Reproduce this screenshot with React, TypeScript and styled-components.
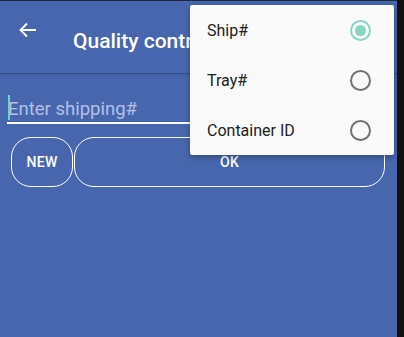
import React, { useState } from 'react';
import styled, { createGlobalStyle } from 'styled-components';

const GlobalStyle = createGlobalStyle`
  html, body {
    margin: 0;
    padding: 0;
    background: #111;
    font-family: Roboto, "Noto Sans", sans-serif;
  }
`;

const Frame = styled.div`
  width: 397px;
  height: 337px;
  padding-top: 1px;
  box-sizing: border-box;
  background: #1c2440;
  position: relative;
  overflow: hidden;
`;

const Screen = styled.div`
  height: 100%;
  background: #4766ad;
  display: flex;
  flex-direction: column;
`;

const Header = styled.div`
  height: 72px;
  display: flex;
  align-items: center;
  padding: 0 0 0 18px;
  box-shadow: 0 1px 0 rgba(30, 45, 90, 0.35), 0 2px 2px rgba(30, 45, 90, 0.15);
`;

const BackButton = styled.button`
  width: 20px;
  height: 20px;
  padding: 0;
  border: none;
  background: none;
  display: flex;
  align-items: center;
  justify-content: center;
  margin-top: -14px;
  cursor: pointer;
`;

const Title = styled.h1`
  margin: 0 0 0 35px;
  font-size: 21px;
  font-weight: 500;
  color: #fff;
  white-space: nowrap;
  padding-top: 8px;
`;

const Body = styled.div`
  padding: 21px 12px 0 7px;
  display: flex;
  flex-direction: column;
`;

const Field = styled.div`
  position: relative;
  display: flex;
`;

const Caret = styled.span`
  position: absolute;
  left: 1px;
  top: 1px;
  width: 2px;
  height: 25px;
  background: #6fd3c3;
`;

const Input = styled.input`
  flex: 1;
  font-family: Roboto, "Noto Sans", sans-serif;
  font-size: 18.5px;
  color: #fff;
  background: transparent;
  border: none;
  border-bottom: 2px solid #fff;
  padding: 4px 0 2px 1px;
  outline: none;
  caret-color: #6fd3c3;
  &::placeholder {
    color: #b4c0e6;
  }
`;

const ButtonRow = styled.div`
  display: flex;
  gap: 1px;
  margin-top: 13px;
  padding-left: 4px;
`;

const PillButton = styled.button<{ grow?: boolean }>`
  flex: ${(p) => (p.grow ? 1 : '0 0 62px')};
  height: 50px;
  border: 1px solid #fff;
  border-radius: 20px;
  background: transparent;
  color: #fff;
  font-family: Roboto, "Noto Sans", sans-serif;
  font-size: 14px;
  font-weight: 500;
  letter-spacing: 0.3px;
  cursor: pointer;
`;

const Menu = styled.div`
  position: absolute;
  top: 5px;
  left: 190px;
  width: 204px;
  background: #fafafa;
  border-radius: 2px;
  box-shadow: 0 2px 6px rgba(0, 0, 0, 0.3);
  padding: 0;
`;

const MenuItem = styled.label`
  height: 50px;
  display: flex;
  align-items: center;
  justify-content: space-between;
  padding: 0 23px 0 17px;
  font-size: 16px;
  color: #212121;
  cursor: pointer;
`;

const Radio = styled.span<{ checked: boolean }>`
  width: 21px;
  height: 21px;
  box-sizing: border-box;
  border-radius: 50%;
  border: 2px solid ${(p) => (p.checked ? '#86d6c6' : '#737373')};
  display: flex;
  align-items: center;
  justify-content: center;
  &::after {
    content: '';
    width: 11px;
    height: 11px;
    border-radius: 50%;
    background: #86d6c6;
    display: ${(p) => (p.checked ? 'block' : 'none')};
  }
`;

const options = ['Ship#', 'Tray#', 'Container ID'];

export default function App() {
  const [selected, setSelected] = useState('Ship#');

  return (
    <>
      <GlobalStyle />
      <Frame>
        <Screen>
          <Header>
            <BackButton aria-label="back">
              <svg width="20" height="20" viewBox="0 0 20 20">
                <path
                  d="M18 10H2.5M9 3.5L2.5 10 9 16.5"
                  stroke="#fff"
                  strokeWidth="1.8"
                  fill="none"
                />
              </svg>
            </BackButton>
            <Title>Quality control</Title>
          </Header>
          <Body>
            <Field>
              <Input placeholder="Enter shipping#" />
              <Caret />
            </Field>
            <ButtonRow>
              <PillButton>NEW</PillButton>
              <PillButton grow>OK</PillButton>
            </ButtonRow>
          </Body>
        </Screen>
        <Menu>
          {options.map((o) => (
            <MenuItem key={o} onClick={() => setSelected(o)}>
              {o}
              <Radio checked={selected === o} />
            </MenuItem>
          ))}
        </Menu>
      </Frame>
    </>
  );
}
